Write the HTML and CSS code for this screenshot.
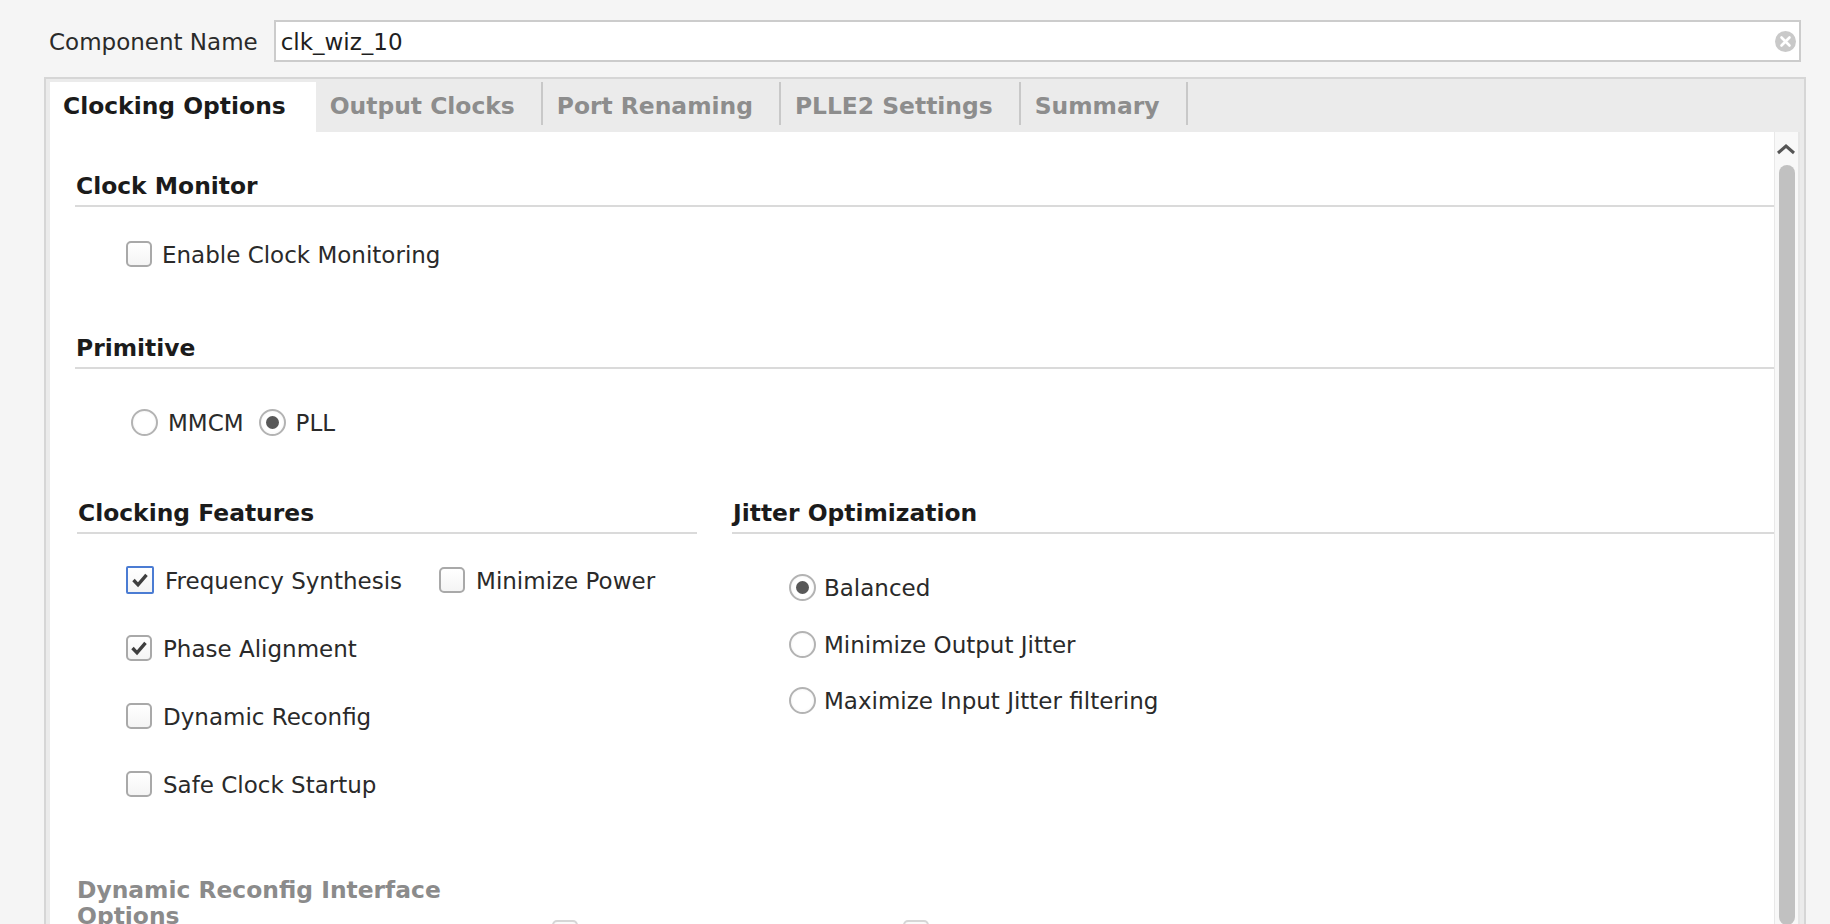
FILE: index.html
```html
<!DOCTYPE html>
<html lang="en">
<head>
<meta charset="utf-8">
<title>Clocking Wizard</title>
<link rel="stylesheet" href="styles.css">
</head>
<body>
<div class="app">
  <div class="name-row">
    <span class="name-label">Component Name</span>
    <div class="name-input">
      <span class="name-value">clk_wiz_10</span>
      <span class="clear-btn">
        <svg width="21" height="21" viewBox="0 0 21 21"><circle cx="10.5" cy="10.5" r="10.5" fill="#c9c9c9"/><path d="M6.5 6.5 L14.5 14.5 M14.5 6.5 L6.5 14.5" stroke="#ffffff" stroke-width="2.6" stroke-linecap="round"/></svg>
      </span>
    </div>
  </div>

  <div class="panel">
    <div class="tabbar">
      <div class="tab active">Clocking Options</div>
      <div class="tab">Output Clocks</div>
      <div class="tab">Port Renaming</div>
      <div class="tab">PLLE2 Settings</div>
      <div class="tab">Summary</div>
    </div>

    <div class="panel-body">
      <div class="content">
        <section class="group g-monitor">
          <h3 class="group-title">Clock Monitor</h3>
          <div class="opt-row r-monitor"><span class="cb"></span><span class="opt-label">Enable Clock Monitoring</span></div>
        </section>

        <section class="group g-primitive">
          <h3 class="group-title">Primitive</h3>
          <div class="opt-row r-primitive">
            <span class="rb"></span><span class="opt-label">MMCM</span>
            <span class="rb checked rb-pll"></span><span class="opt-label">PLL</span>
          </div>
        </section>

        <div class="features">
          <section class="col-left">
            <h3 class="group-title">Clocking Features</h3>
            <div class="opt-row lrow first">
              <span class="cb checked focus"><svg width="20" height="20" viewBox="0 0 20 20"><path d="M3.5 10 L8 14.8 L16.5 4.8" fill="none" stroke="#3f3f3f" stroke-width="3.4" stroke-linejoin="miter"/></svg></span><span class="opt-label">Frequency Synthesis</span>
              <span class="cb cb-power"></span><span class="opt-label">Minimize Power</span>
            </div>
            <div class="opt-row lrow">
              <span class="cb checked"><svg width="20" height="20" viewBox="0 0 20 20"><path d="M3.5 10 L8 14.8 L16.5 4.8" fill="none" stroke="#3f3f3f" stroke-width="3.4" stroke-linejoin="miter"/></svg></span><span class="opt-label">Phase Alignment</span>
            </div>
            <div class="opt-row lrow">
              <span class="cb"></span><span class="opt-label">Dynamic Reconfig</span>
            </div>
            <div class="opt-row lrow">
              <span class="cb"></span><span class="opt-label">Safe Clock Startup</span>
            </div>
          </section>

          <section class="col-right">
            <h3 class="group-title">Jitter Optimization</h3>
            <div class="opt-row rrow first"><span class="rb checked"></span><span class="opt-label">Balanced</span></div>
            <div class="opt-row rrow second"><span class="rb"></span><span class="opt-label">Minimize Output Jitter</span></div>
            <div class="opt-row rrow third"><span class="rb"></span><span class="opt-label">Maximize Input Jitter filtering</span></div>
          </section>
        </div>

        <div class="dyn">
          <h3 class="dyn-title">Dynamic Reconfig Interface Options</h3>
          <div class="dyn-opts">
            <div class="dyn-item first"><span class="cb disabled"></span><span class="opt-label dis">Phase Duty Cycle Config</span></div>
            <div class="dyn-item"><span class="cb disabled"></span><span class="opt-label dis">Write DRP registers</span></div>
          </div>
        </div>
      </div>

      <div class="vscroll">
        <div class="arrow-up">
          <svg width="20" height="12" viewBox="0 0 20 12"><path d="M2 10 L10 3 L18 10" fill="none" stroke="#555" stroke-width="3"/></svg>
        </div>
        <div class="thumb"></div>
      </div>
    </div>
  </div>
</div>
</body>
</html>
```

FILE: styles.css
```css
* { box-sizing: border-box; }

html, body {
  margin: 0;
  padding: 0;
}

body {
  width: 1830px;
  height: 924px;
  overflow: hidden;
  background: #f5f5f5;
  font-family: "DejaVu Sans", "Noto Sans", sans-serif;
  font-size: 23px;
  color: #262626;
}

.app {
  display: flex;
  flex-direction: column;
}

/* ---------- component name ---------- */
.name-row {
  display: flex;
  align-items: center;
  height: 42px;
  margin-top: 20px;
  padding-left: 49px;
  padding-right: 29px;
  gap: 16px;
}

.name-label {
  color: #2a2a2a;
  white-space: nowrap;
  padding-top: 2px;
}

.name-input {
  flex: 1;
  height: 42px;
  display: flex;
  align-items: center;
  background: #ffffff;
  border: 2px solid #cccccc;
  padding: 0 3px 0 5px;
}

.name-value {
  flex: 1;
  color: #1e1e1e;
  padding-top: 2px;
}

.clear-btn {
  display: flex;
  width: 21px;
  height: 21px;
}

/* ---------- tab panel ---------- */
.panel {
  margin-top: 15px;
  margin-left: 44px;
  width: 1762px;
  border: 2px solid #d6d6d6;
  border-bottom: none;
  background: #ebebeb;
  padding: 3px 4px 0 4px;
}

.tabbar {
  display: flex;
  height: 50px;
}

.tab {
  position: relative;
  padding: 1px 28px 0 14px;
  line-height: 46px;
  font-size: 23.4px;
  font-weight: 700;
  color: #8d8d8d;
  white-space: nowrap;
}

.tab:not(.active)::after {
  content: "";
  position: absolute;
  right: 0;
  top: 0;
  width: 2px;
  height: 43px;
  background: #c8c8c8;
}

.tab.active {
  background: #ffffff;
  color: #1b1b1b;
  padding: 1px 30px 0 13px;
}

.panel-body {
  display: flex;
  height: 800px;
}

.content {
  flex: 1;
  background: #ffffff;
}

/* ---------- groups ---------- */
.group {
  margin-left: 25px;
}

.group-title {
  margin: 0;
  font-size: 23.4px;
  font-weight: 700;
  line-height: 31px;
  padding: 1px 0 3px 1px;
  border-bottom: 2px solid #dadada;
  color: #1b1b1b;
}

.g-monitor { margin-top: 38px; }
.g-primitive { margin-top: 62px; }

.opt-row {
  display: flex;
  align-items: center;
  height: 32px;
}

.opt-label {
  white-space: nowrap;
  color: #2a2a2a;
  padding-top: 2px;
}

.r-monitor {
  margin-top: 31px;
  padding-left: 51px;
  gap: 10px;
}

.r-primitive {
  margin-top: 37px;
  padding-left: 56px;
}
.r-primitive .rb { margin-right: 10px; }
.r-primitive .rb-pll { margin-left: 15px; }

/* ---------- checkbox / radio ---------- */
.cb {
  display: inline-flex;
  align-items: center;
  justify-content: center;
  flex: none;
  width: 26px;
  height: 26px;
  border: 2px solid #a9a9a9;
  border-radius: 5px;
  background: linear-gradient(#ffffff, #f4f4f4);
}

.cb.focus {
  width: 28px;
  height: 28px;
  border-color: #4b7cd3;
  border-radius: 2px;
}

.cb.disabled {
  border-color: #d6d6d6;
  background: #fafafa;
}

.rb {
  position: relative;
  display: inline-block;
  flex: none;
  width: 27px;
  height: 27px;
  border: 2px solid #b3b3b3;
  border-radius: 50%;
  background: radial-gradient(circle, #ffffff 55%, #f0f0f0 100%);
}

.rb.checked::after {
  content: "";
  position: absolute;
  left: 50%;
  top: 50%;
  width: 13px;
  height: 13px;
  margin: -6.5px 0 0 -6.5px;
  border-radius: 50%;
  background: #585858;
}

/* ---------- features ---------- */
.features {
  display: flex;
  margin-top: 59px;
}

.col-left {
  margin-left: 27px;
  width: 620px;
  flex: none;
}

.col-right {
  margin-left: 35px;
  flex: 1;
}

.lrow {
  margin-top: 36px;
  padding-left: 49px;
  gap: 11px;
}
.lrow.first { margin-top: 30px; }
.lrow .cb-power { margin-left: 26px; }

.rrow {
  padding-left: 57px;
  gap: 8px;
}
.rrow.first { margin-top: 37px; }
.rrow.second { margin-top: 25px; }
.rrow.third { margin-top: 24px; }

/* ---------- dynamic reconfig ---------- */
.dyn {
  display: flex;
  margin-top: 77px;
  margin-left: 27px;
}

.dyn-title {
  margin: 0;
  width: 400px;
  flex: none;
  font-size: 23.4px;
  font-weight: 700;
  line-height: 26px;
  color: #8b8b8b;
}

.dyn-opts {
  display: flex;
  align-items: flex-start;
  margin-top: 43px;
  margin-left: 75px;
}

.dyn-item {
  display: flex;
  align-items: flex-start;
  gap: 10px;
}

.dyn-item.first {
  width: 351px;
  flex: none;
}

.opt-label.dis {
  color: #b5b5b5;
  line-height: 26px;
  margin-top: 2px;
  padding-top: 0;
}

/* ---------- scrollbar ---------- */
.vscroll {
  width: 26px;
  flex: none;
  background: #f8f8f8;
  border-left: 1px solid #e8e8e8;
  border-right: 2px solid #e6e6e6;
  display: flex;
  flex-direction: column;
  align-items: flex-start;
}

.arrow-up {
  height: 33px;
  width: 100%;
  display: flex;
  align-items: center;
  justify-content: center;
  padding-right: 2px;
}

.thumb {
  margin-left: 4px;
  width: 16px;
  height: 760px;
  border-radius: 8px;
  background: #c1c1c1;
}
```
